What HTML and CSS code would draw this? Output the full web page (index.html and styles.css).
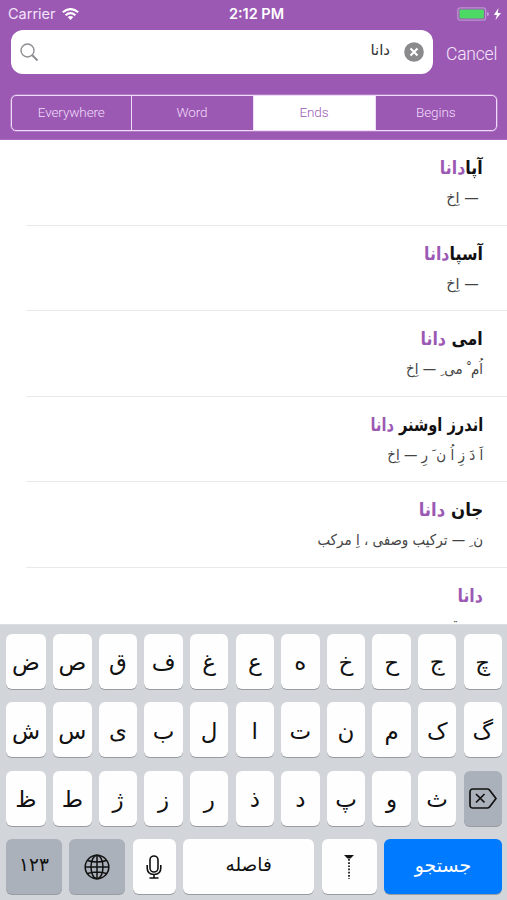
FILE: index.html
```html
<!DOCTYPE html>
<html lang="fa">
<head>
<meta charset="utf-8">
<title>جستجو</title>
<link rel="stylesheet" href="styles.css">
</head>
<body>
<div class="screen">
  <header class="header">
    <div class="status">
      <div class="carrier"><span>Carrier</span>
        <svg class="wifi" width="17" height="12" viewBox="0 0 17 12" fill="none" stroke="#fff" stroke-width="2.1"><path d="M.8 4.3Q8.500-2.200 16.200 4.300M3.600 7.200Q8.500 3 13.400 7.200"/><path d="M5.700 9Q8.500 6.800 11.300 9L8.500 12Z" fill="#fff" stroke="none"/></svg>
      </div>
      <span class="time">2:12 PM</span>
      <div class="power">
        <svg width="44" height="14" viewBox="0 0 44 14"><rect x=".8" y=".8" width="27.800" height="12.400" rx="2.500" fill="none" stroke="#bd91d0" stroke-width="1.300"/><path d="M30 5q2 0 2 2t-2 2z" fill="#c79dd7"/><rect x="2.500" y="2.500" width="24.400" height="9" rx="1" fill="#4cd964"/><path d="M41.500 1L36.800 8H39.900L38.500 13L44 6H40.700Z" fill="#fff"/></svg>
      </div>
    </div>
    <div class="searchbar">
      <div class="field">
        <svg class="lens" width="19" height="19" viewBox="0 0 19 19" fill="none" stroke="#8e8e93"><circle cx="7.500" cy="7.500" r="6.500" stroke-width="1.400"/><path d="M12 12L17.500 17.500" stroke-width="2"/></svg>
        <span class="query" dir="rtl">دانا</span>
        <svg width="20" height="20" viewBox="0 0 20 20"><circle cx="10" cy="10" r="9.800" fill="#8a8a8d"/><path d="M6.500 6.500L13.500 13.500M13.500 6.500L6.500 13.500" stroke="#fff" stroke-width="2.100"/></svg>
      </div>
      <span class="cancel">Cancel</span>
    </div>
    <div class="segments"><span>Everywhere</span><span>Word</span><span class="selected">Ends</span><span>Begins</span></div>
  </header>
  <main class="results" dir="rtl">
    <article class="entry"><h2>آپا<b>دانا</b></h2><p class="short">&nbsp;— اِخ</p></article>
    <article class="entry"><h2>آسپا<b>دانا</b></h2><p class="short">&nbsp;— اِخ</p></article>
    <article class="entry"><h2>امی <b>دانا</b></h2><p>اُم ْ می ِ — اِخ</p></article>
    <article class="entry"><h2 class="long">اندرز اوشنر <b>دانا</b></h2><p>اَ دَ زِ اُ ن َ رِ — اِخ</p></article>
    <article class="entry"><h2 class="wide">جان <b>دانا</b></h2><p>ن ِ — ترکیب وصفی ، اِ مرکب</p></article>
    <article class="entry"><h2><b>دانا</b></h2><p class="short">&nbsp;— ق</p></article>
  </main>
  <section class="keyboard">
    <div class="row"><span>ض</span><span>ص</span><span>ق</span><span>ف</span><span>غ</span><span>ع</span><span>ه</span><span>خ</span><span>ح</span><span>ج</span><span>چ</span></div>
    <div class="row"><span>ش</span><span>س</span><span>ی</span><span>ب</span><span>ل</span><span>ا</span><span>ت</span><span>ن</span><span>م</span><span>ک</span><span>گ</span></div>
    <div class="row"><span>ظ</span><span>ط</span><span>ژ</span><span>ز</span><span>ر</span><span>ذ</span><span>د</span><span>پ</span><span>و</span><span>ث</span><span class="gray"><svg width="28" height="21" viewBox="0 0 28 21" fill="none" stroke="#111" stroke-width="1.700" stroke-linejoin="round"><path d="M4 1H18.500Q19.500 1 20.300 1.800L27 10.500L20.300 19.200Q19.500 20 18.500 20H4Q1 20 1 17V4Q1 1 4 1Z"/><path d="M7 6L15.500 14.500M15.500 6L7 14.500"/></svg></span></div>
    <div class="row bottom">
      <span class="gray numbers">۱۲۳</span>
      <span class="gray"><svg width="26" height="26" viewBox="0 0 26 26" fill="none" stroke="#111" stroke-width="1.500"><circle cx="13" cy="13" r="11.800"/><ellipse cx="13" cy="13" rx="6" ry="11.800"/><path d="M13 1V25M1 13H25M3.500 6.500Q13 9.500 22.500 6.500M3.500 19.500Q13 16.500 22.500 19.500"/></svg></span>
      <span><svg width="16" height="24" viewBox="0 0 16 24" fill="none" stroke="#111" stroke-width="1.600"><rect x="4" y="1" width="8" height="16" rx="4"/><path d="M1.200 10V13Q1.200 19.500 8 19.500T14.800 13V10M8 19.500V23M3.500 23H12.500"/></svg></span>
      <span class="space">فاصله</span>
      <span><svg width="12" height="25" viewBox="0 0 12 25"><path d="M1 1H11L7.500 4.500H4.500Z" fill="#111"/><path d="M6 5V25" stroke="#111" stroke-width="1.700" stroke-dasharray="1.700 1.500"/></svg></span>
      <span class="search">جستجو</span>
    </div>
  </section>
</div>
</body>
</html>
```
FILE: styles.css
```css
* { box-sizing: border-box; }
body { margin: 0; font-family: Roboto, "DejaVu Sans", sans-serif; background: #fff; }
svg { display: block; flex: none; }
.screen { width: 507px; height: 900px; display: flex; flex-direction: column; overflow: hidden; }
.header { height: 140px; flex: none; background: #9b59b4; color: #fff; border-bottom: 1px solid #a96cc0; }
.status { height: 30px; padding: 0 6px 3px 8px; display: grid; grid-template-columns: 1fr auto 1fr; align-items: center; font: 15px/20px Inter, sans-serif; }
.carrier { display: flex; align-items: center; gap: 6px; color: #f3e3f9; font-size: 14.500px; }
.time { font-weight: 600; font-size: 14.500px; margin-left: 4px; }
.power { display: flex; justify-content: flex-end; }
.searchbar { display: flex; align-items: center; padding-left: 11px; }
.field { width: 422px; height: 44px; border-radius: 12px; background: #fff; display: flex; align-items: center; padding: 0 9px; }
.query { margin-left: auto; margin-right: 14px; padding-bottom: 4px; color: #333; font: 15px/20px "DejaVu Sans", sans-serif; }
.cancel { margin-left: 13px; padding-top: 3px; font-weight: 300; font-size: 17.500px; letter-spacing: -.2px; color: #f6e7fb; }
.segments { margin: 21px 10px 0 11px; height: 36px; border: 1px solid #f0dcf8; border-radius: 5px; display: grid; grid-template-columns: 118.500px 122px 122px 1fr; overflow: hidden; box-shadow: 0 0 0 .5px #c79dd7; }
.segments span { display: flex; align-items: center; justify-content: center; padding-bottom: 2px; font-size: 13.500px; letter-spacing: -.1px; font-weight: 300; color: #f2dcf9; }
.segments span + span { border-left: 1px solid #f0dcf8; }
.segments .selected { background: #fff; color: #9b59b4; }
.results { height: 484px; flex: none; overflow: hidden; font-family: "DejaVu Sans", sans-serif; }
.entry { height: 85.500px; padding: 14px 24px 0 0; background: linear-gradient(#e9e9eb, #e9e9eb) 26px 100% / 100% 1px no-repeat; }
.entry h2, .entry p { width: max-content; transform-origin: right center; }
.entry h2 { margin: 0; font-size: 18px; line-height: 27px; font-weight: 700; color: #111; transform: scaleX(.88); }
.entry h2.long { transform: scaleX(.81); }
.entry h2.wide { transform: scaleX(.92); }
.entry h2 b { color: #9b59b4; }
.entry p { margin: 4px 0 0; font-size: 15px; line-height: 26px; color: #444; transform: scaleX(.895); }
.entry p.short { transform: scaleX(.97); }
.keyboard { flex: 1; background: #d2d5da; padding: 8.500px 5px 6px 6px; display: flex; flex-direction: column; gap: 13.500px; border-top: 1px solid #dcdee1; font-family: "DejaVu Sans", sans-serif; }
.row { height: 55px; display: grid; grid-template-columns: 40px repeat(10, 1fr); gap: 7.200px; }
.row > span { min-width: 0; background: #fefefe; border-radius: 6px; box-shadow: 0 1px 0 #989b9f; display: flex; align-items: center; justify-content: center; padding-top: 2px; color: #111; font-size: 23px; line-height: 30px; }
.row > .gray { background: #abb1bb; }
.row > span:has(svg) { padding-top: 0; }
.row.bottom { grid-template-columns: 56px 56px 43px 131px 55px 1fr; column-gap: 7.400px; }
.bottom > .numbers, .bottom > .space, .bottom > .search { font-size: 18.500px; padding: 0 0 3px; }
.bottom > .search { background: #007aff; color: #fff; font-size: 19px; }
```
